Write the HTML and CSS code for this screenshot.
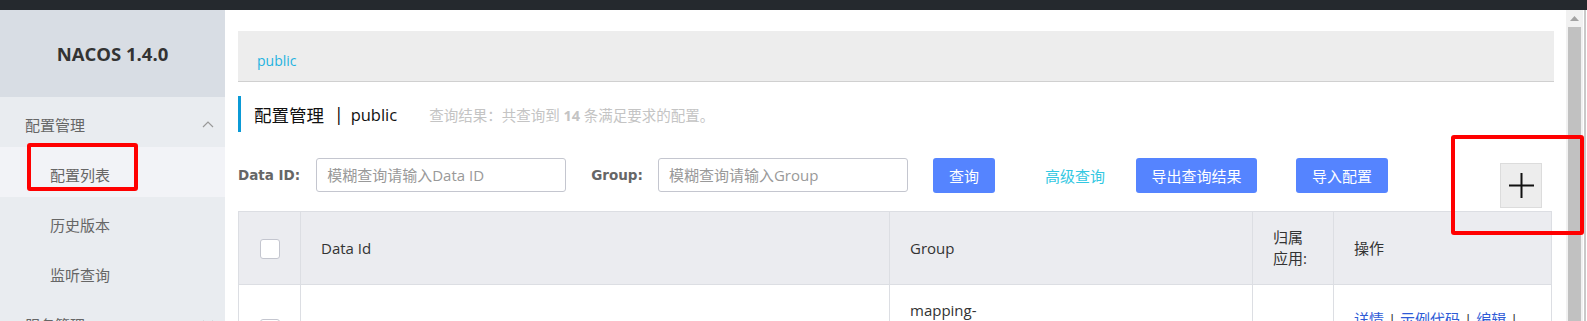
FILE: index.html
```html
<!DOCTYPE html>
<html lang="zh-CN">
<head>
<meta charset="utf-8">
<title>NACOS 1.4.0</title>
<link rel="stylesheet" href="styles.css">
</head>
<body>
<div class="topbar"></div>
<div class="app">
  <aside class="sidebar">
    <div class="brand">NACOS 1.4.0</div>
    <nav class="menu">
      <div class="menu-title"><span>配置管理</span>
        <svg class="chev" width="12" height="8" viewBox="0 0 12 8"><path d="M1 7 L6 2 L11 7" fill="none" stroke="#999" stroke-width="1.2"/></svg>
      </div>
      <div class="menu-item active">配置列表</div>
      <div class="menu-item">历史版本</div>
      <div class="menu-item">监听查询</div>
      <div class="menu-title"><span>服务管理</span>
        <svg class="chev" width="12" height="8" viewBox="0 0 12 8"><path d="M1 1 L6 6 L11 1" fill="none" stroke="#999" stroke-width="1.2"/></svg>
      </div>
    </nav>
  </aside>
  <main class="main">
    <div class="breadcrumb"><span class="crumb">public</span></div>
    <div class="page-title">
      <span class="title-main">配置管理</span><span class="title-sep">|</span><span class="title-ns">public</span>
      <span class="result">查询结果：共查询到 <b>14</b> 条满足要求的配置。</span>
    </div>
    <div class="search-row">
      <label class="field-label label-id">Data ID:</label>
      <input class="field-input" type="text" placeholder="模糊查询请输入Data ID">
      <label class="field-label label-group">Group:</label>
      <input class="field-input" type="text" placeholder="模糊查询请输入Group">
      <button class="btn btn-query">查询</button>
      <a class="adv-link">高级查询</a>
      <button class="btn btn-export">导出查询结果</button>
      <button class="btn btn-import">导入配置</button>
      <button class="btn-add" aria-label="add">
        <svg width="27" height="27" viewBox="0 0 27 27"><path d="M1 13.5 H26 M13.5 1 V26" stroke="#111" stroke-width="2"/></svg>
      </button>
    </div>
    <table class="config-table">
      <colgroup>
        <col class="c-check"><col class="c-id"><col class="c-group"><col class="c-app"><col class="c-op">
      </colgroup>
      <thead>
        <tr>
          <th class="cell-check"><span class="checkbox"></span></th>
          <th>Data Id</th>
          <th>Group</th>
          <th>归属应用:</th>
          <th>操作</th>
        </tr>
      </thead>
      <tbody>
        <tr>
          <td class="cell-check body-check"><span class="checkbox"></span></td>
          <td></td>
          <td class="body-group">mapping-</td>
          <td></td>
          <td class="body-ops"><a>详情</a> | <a>示例代码</a> | <a>编辑</a> |</td>
        </tr>
      </tbody>
    </table>
  </main>
  <div class="scrollbar">
    <div class="sb-arrow"><svg width="9" height="5" viewBox="0 0 9 5"><path d="M0 5 L4.5 0 L9 5 Z" fill="#a3a3a3"/></svg></div>
    <div class="sb-thumb"></div>
  </div>
  <div class="edge"></div>
</div>
<div class="mark mark-menu"></div>
<div class="mark mark-add"></div>
</body>
</html>
```

FILE: styles.css
```css
* { box-sizing: border-box; }
html, body { margin: 0; height: 321px; overflow: hidden; }
body {
  font-family: "Open Sans", "Noto Sans CJK SC", sans-serif;
  font-size: 15px;
  color: #333;
  background: #fff;
  position: relative;
}
.topbar { height: 10px; background: #25292e; }
.app { display: flex; height: 311px; }

/* sidebar */
.sidebar { width: 225px; flex: none; background: #e9ecf0; }
.brand {
  height: 87px;
  background: #d8dde4;
  display: flex;
  align-items: center;
  justify-content: center;
  font-weight: 700;
  font-size: 18.5px;
  color: #333;
}
.menu-title {
  height: 50px;
  padding: 4px 11px 0 25px;
  display: flex;
  align-items: center;
  justify-content: space-between;
  color: #666;
}
.chev { display: block; }
.menu-item {
  height: 50px;
  padding: 4px 0 0 50px;
  display: flex;
  align-items: center;
  color: #666;
}
.menu-item.active { background: #f2f3f7; }

/* main */
.main { flex: 1; min-width: 0; padding: 21px 12px 0 13px; overflow: hidden; }
.breadcrumb {
  height: 51px;
  background: #ededed;
  border-bottom: 1px solid #d0d0d0;
  padding: 8px 0 0 19px;
  display: flex;
  align-items: center;
}
.crumb { color: #1fb3e0; font-size: 14px; }

.page-title {
  margin-top: 14px;
  height: 36px;
  border-left: 3px solid #0b9ad6;
  padding-left: 13px;
  display: flex;
  align-items: center;
  color: #111;
}
.title-main { font-size: 17.5px; }
.title-sep { font-size: 17.5px; margin: 0 7px 0 10px; color: #000; }
.title-ns { font-size: 16.5px; }
.result { margin-left: 32px; font-size: 14.5px; color: #c4c4c4; }
.result b { font-weight: 700; }

.search-row {
  margin-top: 26px;
  display: flex;
  align-items: flex-start;
}
.field-label {
  font-family: "DejaVu Sans", sans-serif;
  font-weight: 700;
  font-size: 13.5px;
  color: #666;
  height: 34px;
  display: flex;
  align-items: center;
}
.label-id { margin-right: 16px; }
.label-group { margin: 0 15px 0 25px; }
.field-input {
  width: 250px;
  height: 34px;
  border: 1px solid #c4c6cf;
  border-radius: 3px;
  padding: 0 10px;
  font-family: inherit;
  font-size: 15px;
  color: #333;
  background: #fff;
  outline: none;
}
.field-input::placeholder { color: #999; }
.btn {
  height: 35px;
  padding: 0;
  border: none;
  border-radius: 3px;
  background: #5584ff;
  color: #fff;
  font-family: inherit;
  font-size: 15px;
}
.btn-query { margin-left: 25px; width: 62px; }
.adv-link {
  margin-left: 50px;
  height: 35px;
  display: flex;
  align-items: center;
  color: #33c8e2;
}
.btn-export { margin-left: 31px; width: 121px; }
.btn-import { margin-left: 39px; width: 92px; }
.btn-add {
  margin: 5px 12px 0 auto;
  width: 42px;
  height: 45px;
  padding: 0;
  background: #ededed;
  border: 1px solid #dcdcdc;
  display: flex;
  align-items: center;
  justify-content: center;
}
.btn-add svg { display: block; }

/* table */
.config-table {
  margin-top: 3px;
  width: 1313px;
  border-collapse: collapse;
  table-layout: fixed;
}
.c-check { width: 62px; }
.c-id { width: 589px; }
.c-group { width: 363px; }
.c-app { width: 81px; }
.c-op { width: 218px; }
.config-table th, .config-table td {
  border: 1px solid #dcdee3;
  padding: 0 20px;
  text-align: left;
  font-weight: 400;
  line-height: 21px;
}
.config-table thead tr { height: 73px; background: #ebecf0; }
.config-table th { color: #333; vertical-align: middle; }
.config-table th.cell-check, .config-table td.cell-check { padding: 0; text-align: center; }
.checkbox {
  display: inline-block;
  width: 20px;
  height: 20px;
  border: 1px solid #c4c6cf;
  border-radius: 3px;
  background: #fff;
  vertical-align: middle;
}
.config-table tbody td { vertical-align: top; height: 90px; color: #333; }
.config-table td.body-check { padding-top: 34px; }
.body-check .checkbox { display: block; margin: 0 auto; }
.body-group { padding-top: 15px !important; }
.body-ops { padding-top: 24px !important; color: #2f5bd6; }
.body-ops a { color: #2f5bd6; }

/* scrollbar */
.scrollbar { width: 17px; flex: none; background: #f1f1f1; display: flex; flex-direction: column; }
.sb-arrow { height: 17px; display: flex; align-items: center; justify-content: center; }
.sb-arrow svg { display: block; }
.sb-thumb { flex: 1; margin: 0 2px; background: #c1c1c1; }
.edge { width: 4px; flex: none; background: linear-gradient(to right, #fff 0 1px, #c9c9c9 1px 3px, #fff 3px); }

/* annotation boxes */
.mark { position: absolute; border: 4px solid #ff0000; border-radius: 3px; }
.mark-menu { left: 27px; top: 143px; width: 111px; height: 48px; }
.mark-add { left: 1451px; top: 135px; width: 133px; height: 100px; }
```
